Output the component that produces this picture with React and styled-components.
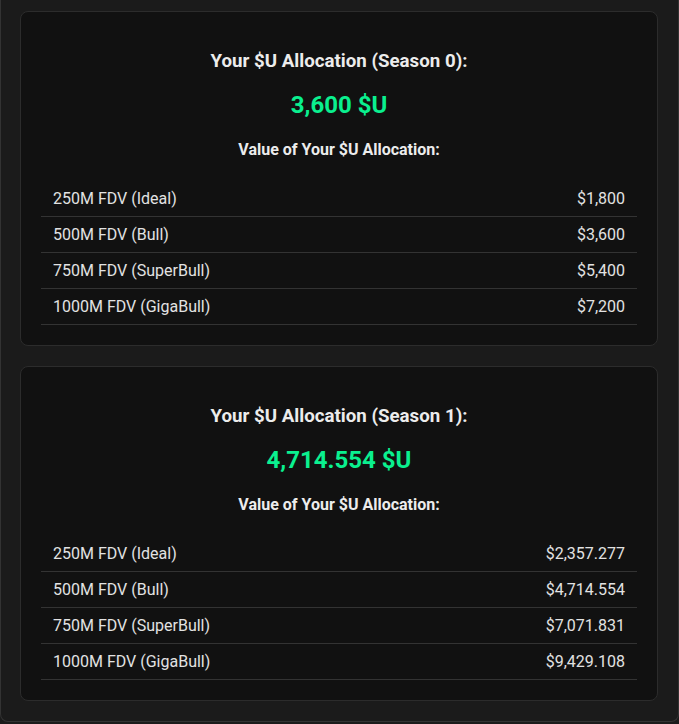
import React from "react"
import styled, { createGlobalStyle } from "styled-components"

const GlobalStyle = createGlobalStyle`
  html, body {
    margin: 0;
    padding: 0;
    background: #1b1b1b;
    font-family: Roboto, "Liberation Sans", sans-serif;
  }
`

const Panel = styled.div`
  box-sizing: border-box;
  width: 679px;
  display: flex;
  flex-direction: column;
  gap: 20px;
  padding: 11px 20px 20px 19px;
  background: #1b1b1b;
  border: 1px solid #333;
  border-top: none;
  border-radius: 0 0 8px 8px;
`

const Card = styled.div`
  background: #111111;
  border: 1px solid #2c2c2c;
  border-radius: 8px;
  padding: 20px;
  text-align: center;
  color: #ececec;
`

const Title = styled.h3`
  font-size: 18.72px;
  font-weight: 700;
  margin: 18px 0 0;
  line-height: 22px;
`

const Amount = styled.div`
  font-size: 24px;
  font-weight: 700;
  color: #0af08f;
  line-height: 28px;
  margin-top: 19px;
`

const SubTitle = styled.h4`
  font-size: 16px;
  font-weight: 700;
  margin: 21px 0 0;
  line-height: 19px;
`

const Table = styled.div`
  margin-top: 22px;
  display: flex;
  flex-direction: column;
`

const Row = styled.div`
  display: flex;
  justify-content: space-between;
  padding: 8px 12px;
  line-height: 19px;
  font-size: 16px;
  color: #e2e2e2;
  border-bottom: 1px solid #333;
`

const allocations = [
  {
    season: 0,
    amount: "3,600",
    values: ["$1,800", "$3,600", "$5,400", "$7,200"],
  },
  {
    season: 1,
    amount: "4,714.554",
    values: ["$2,357.277", "$4,714.554", "$7,071.831", "$9,429.108"],
  },
]

const tiers = ["250M FDV (Ideal)", "500M FDV (Bull)", "750M FDV (SuperBull)", "1000M FDV (GigaBull)"]

export default function App() {
  return (
    <>
      <GlobalStyle />
      <Panel>
        {allocations.map(a => (
          <Card key={a.season}>
            <Title>Your $U Allocation (Season {a.season}):</Title>
            <Amount>{a.amount} $U</Amount>
            <SubTitle>Value of Your $U Allocation:</SubTitle>
            <Table>
              {tiers.map((t, i) => (
                <Row key={t}>
                  <span>{t}</span>
                  <span>{a.values[i]}</span>
                </Row>
              ))}
            </Table>
          </Card>
        ))}
      </Panel>
    </>
  )
}
